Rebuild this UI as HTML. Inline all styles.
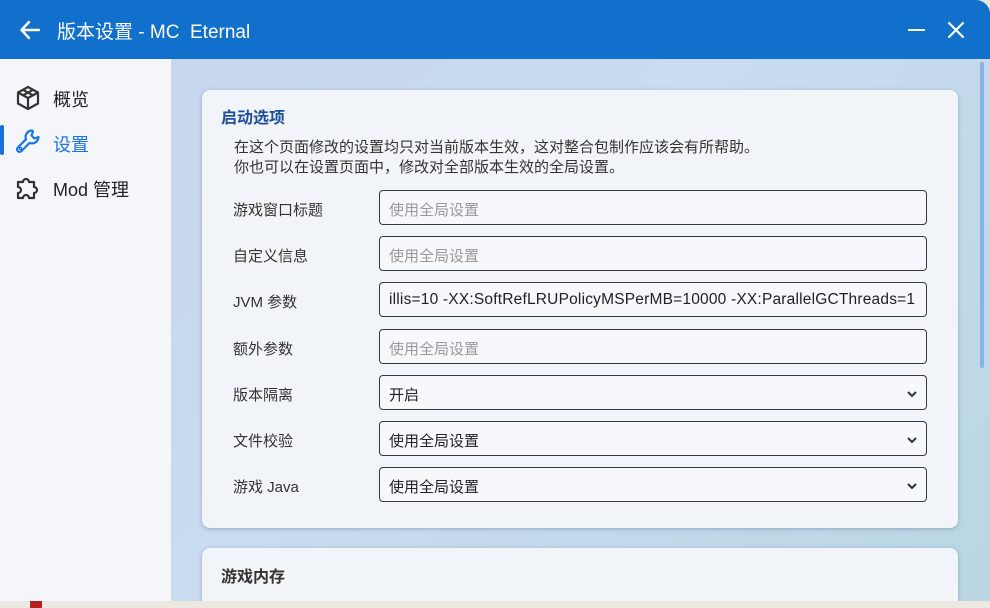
<!DOCTYPE html>
<html><head><meta charset="utf-8"><style>
*{margin:0;padding:0;box-sizing:border-box}
body{width:990px;height:608px;overflow:hidden;font-family:"Liberation Sans","Noto Sans CJK SC",sans-serif;background:#e8e4dc;position:relative}
.win{position:absolute;left:0;top:0;width:990px;height:602px;border-top-right-radius:14px;overflow:hidden;background:linear-gradient(135deg,#c6d5ee 0%,#c9dcf0 50%,#b9d6e2 100%)}
.hdr{position:absolute;left:0;top:0;width:990px;height:59px;background:#1270cd;color:#fff}
.hdr .t{position:absolute;left:57px;top:17px;font-size:19px;color:#fff}
.side{position:absolute;left:0;top:59px;width:171px;height:543px;background:#f4f6fa}
.nav{position:absolute;left:53px;font-size:18px;color:#222}
.card{position:absolute;left:202px;width:756px;background:#f1f4f9;border-radius:8px;box-shadow:0 1px 4px rgba(60,80,120,.35)}
.lab{position:absolute;left:233px;font-size:15px;color:#333}
.inp{position:absolute;left:379px;width:548px;height:35px;border:1.5px solid #333a44;border-radius:4px;background:#f6f8fc;font-size:15px;padding:8px 9px;color:#222;white-space:nowrap;overflow:hidden}
.ph{color:#999}
.chev{position:absolute;right:8px;top:13px}
</style></head><body>
<div class="win">
<div class="hdr">
<svg style="position:absolute;left:19px;top:19px" width="22" height="22" viewBox="0 0 22 22" fill="none" stroke="#fff" stroke-width="2.4" stroke-linecap="round" stroke-linejoin="round"><path d="M20 11H3M10 3L2.5 11L10 19"/></svg>
<div class="t">版本设置 - MC&nbsp; Eternal</div>
<div style="position:absolute;left:908px;top:29px;width:17px;height:2px;background:#fff"></div>
<svg style="position:absolute;left:947px;top:21px" width="18" height="18" viewBox="0 0 18 18" stroke="#fff" stroke-width="2.2" stroke-linecap="round"><path d="M2 2L16 16M16 2L2 16"/></svg>
</div>
<div class="side">
<svg style="position:absolute;left:15px;top:26px" width="26" height="26" viewBox="0 0 26 26" fill="none" stroke="#333" stroke-width="2.2" stroke-linejoin="round"><path d="M13 2L23 7.5V18.5L13 24L3 18.5V7.5Z"/><path d="M3 7.5L13 13L23 7.5M13 13V24M8 4.8L18 10.3M18 4.8L8 10.3"/></svg>
<div class="nav" style="top:27px">概览</div>
<div style="position:absolute;left:0;top:66px;width:4px;height:30px;background:#1a6fe0;border-radius:2px"></div>
<svg style="position:absolute;left:15px;top:69px" width="26" height="26" viewBox="0 0 26 26" fill="none" stroke="#1a73e8" stroke-width="2.2" stroke-linejoin="round" stroke-linecap="round"><path d="M17 2.5a6.5 6.5 0 0 0-6 8.8L2.8 19.5a2.5 2.5 0 0 0 3.6 3.6l8.2-8.2A6.5 6.5 0 0 0 23.5 9l-4 1.5-3-3 1.5-4z"/><circle cx="5.5" cy="20.5" r="0.6"/></svg>
<div class="nav" style="top:72px;color:#1a73e8">设置</div>
<svg style="position:absolute;left:15px;top:115px" width="26" height="26" viewBox="0 0 26 26" fill="none" stroke="#333" stroke-width="2.2" stroke-linejoin="round"><path d="M3 8h5a3 3 0 1 1 6 0h5v5a3 3 0 1 1 0 6v5h-5a3 3 0 1 0-6 0H3v-5a3 3 0 1 0 0-6z"/></svg>
<div class="nav" style="top:117px">Mod 管理</div>
</div>
<div style="position:absolute;left:980px;top:62px;width:4px;height:306px;background:#86b3ec;border-radius:2px"></div>
<div class="card" style="top:90px;height:438px"></div>
<div style="position:absolute;left:221px;top:104px;font-size:16px;font-weight:bold;color:#1d4f9c">启动选项</div>
<div style="position:absolute;left:234px;top:138px;font-size:15px;color:#333;line-height:20px">在这个页面修改的设置均只对当前版本生效，这对整合包制作应该会有所帮助。<br>你也可以在设置页面中，修改对全部版本生效的全局设置。</div>
<div class="lab" style="top:199px">游戏窗口标题</div>
<div class="inp" style="top:190px"><span class="ph">使用全局设置</span></div>
<div class="lab" style="top:245px">自定义信息</div>
<div class="inp" style="top:236px"><span class="ph">使用全局设置</span></div>
<div class="lab" style="top:291px">JVM 参数</div>
<div class="inp" style="top:282px;font-size:15.5px;letter-spacing:0.2px">illis=10 -XX:SoftRefLRUPolicyMSPerMB=10000 -XX:ParallelGCThreads=1</div>
<div class="lab" style="top:338px">额外参数</div>
<div class="inp" style="top:329px"><span class="ph">使用全局设置</span></div>
<div class="lab" style="top:384px">版本隔离</div>
<div class="inp" style="top:375px">开启<svg class="chev" width="12" height="10" viewBox="0 0 12 10" fill="none" stroke="#333" stroke-width="2"><path d="M2 3l4 4 4-4"/></svg></div>
<div class="lab" style="top:430px">文件校验</div>
<div class="inp" style="top:421px">使用全局设置<svg class="chev" width="12" height="10" viewBox="0 0 12 10" fill="none" stroke="#333" stroke-width="2"><path d="M2 3l4 4 4-4"/></svg></div>
<div class="lab" style="top:476px">游戏 Java</div>
<div class="inp" style="top:467px">使用全局设置<svg class="chev" width="12" height="10" viewBox="0 0 12 10" fill="none" stroke="#333" stroke-width="2"><path d="M2 3l4 4 4-4"/></svg></div>
<div class="card" style="top:548px;height:80px"></div>
<div style="position:absolute;left:221px;top:563px;font-size:16px;font-weight:bold;color:#333">游戏内存</div>
</div>
<div style="position:absolute;left:0;top:601px;width:990px;height:7px;background:#ede9e0"></div>
<div style="position:absolute;left:30px;top:601px;width:12px;height:7px;background:#b22222"></div>
</body></html>
